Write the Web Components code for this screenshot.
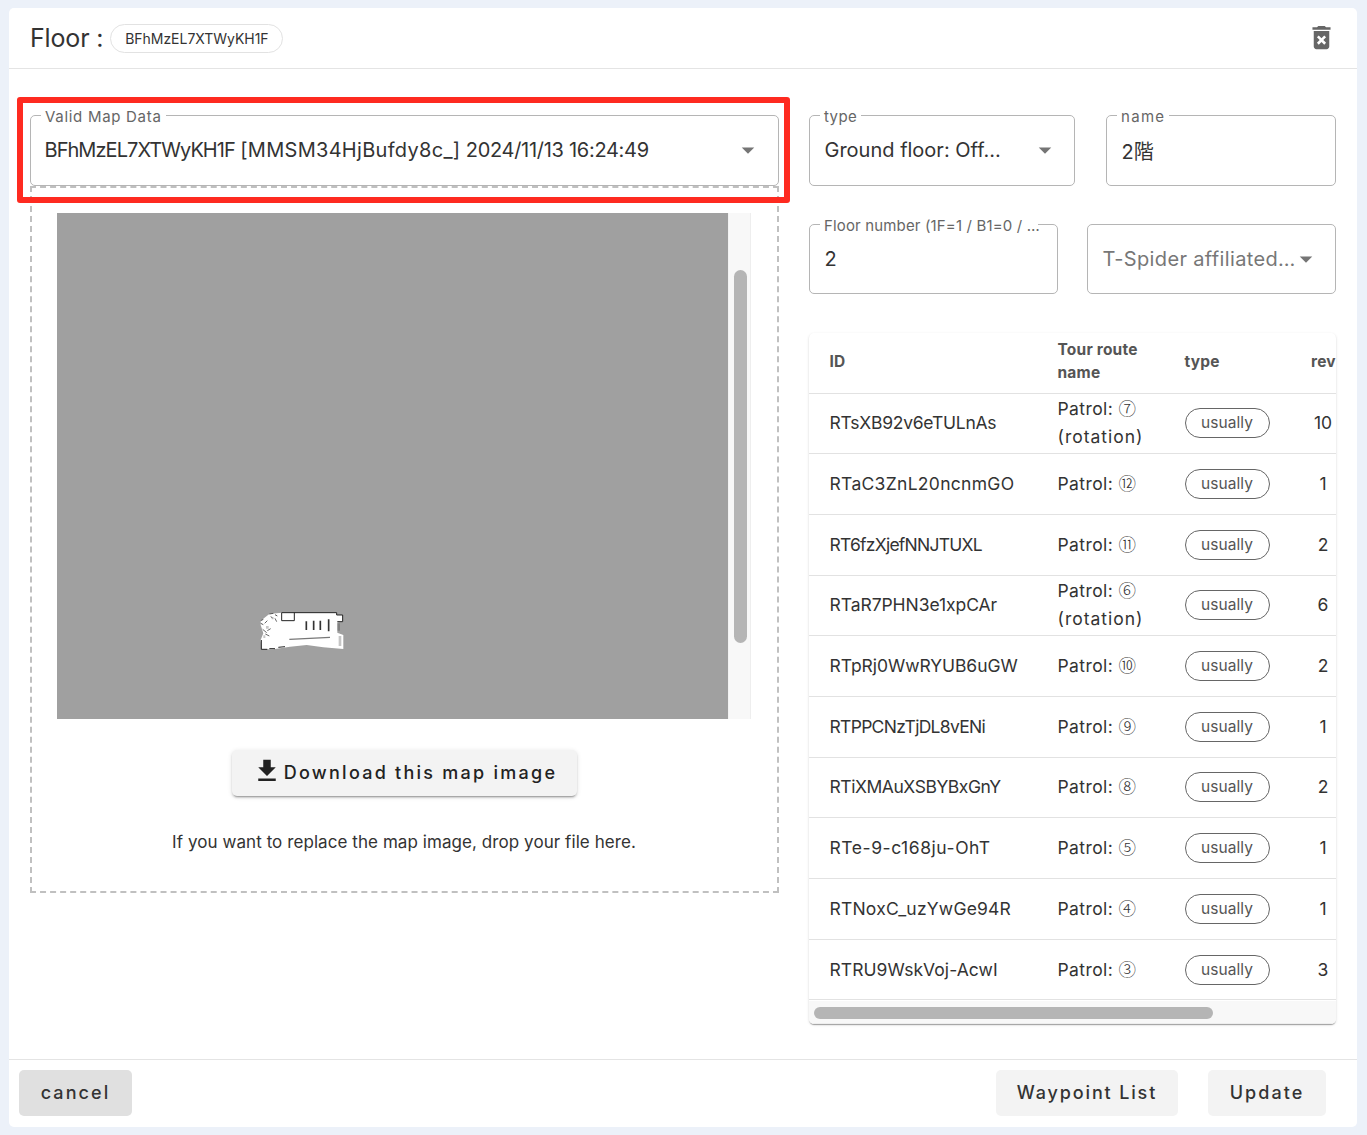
<!DOCTYPE html>
<html lang="en">
<head>
<meta charset="utf-8">
<title>Floor</title>
<style>
html,body{margin:0;padding:0;background:#ecf1f9;}
body{font-family:"Inter","Noto Sans CJK JP",sans-serif;color:#333;padding:8px 10px 8px 9px;box-sizing:border-box;height:1135px;overflow:hidden;}
</style>
</head>
<body>
<floor-dialog>
  <dialog-header slot="header" title-text="Floor :" chip="BFhMzEL7XTWyKH1F"></dialog-header>
  <div slot="left" style="display:contents">
    <outlined-field label="Valid Map Data" dropdown style="--value-ls:-.29px;--legend-ls:.7px;--arrow-right:15px"><span style="letter-spacing:-.95px;margin-left:-1px">BFhMzEL7XTWyKH1F</span> <span style="letter-spacing:.3px">[MMSM34HjBufdy8c_]</span> 2024/11/13 16:24:49</outlined-field>
    <red-mark></red-mark>
    <drop-zone></drop-zone>
  </div>
  <div slot="right" style="display:contents">
    <field-grid>
      <outlined-field style="width:266px;--legend-ls:.4px;--arrow-right:14px" label="type" dropdown>Ground floor: Off…</outlined-field>
      <outlined-field style="width:230px;--legend-ls:1.3px" label="name">2階</outlined-field>
    </field-grid>
    <field-grid>
      <outlined-field style="width:249px;--fh:77px;--legend-ls:.15px" label="Floor number (1F=1 / B1=0 / …">2</outlined-field>
      <outlined-field style="width:249px;--fh:70px;--value-color:#777;--value-ls:.35px;--arrow-right:14px;--gap:2px" dropdown>T-Spider affiliated…</outlined-field>
    </field-grid>
    <route-table></route-table>
  </div>
  <action-button slot="foot-left" variant="cancel" w="113" style="letter-spacing:2.1px">cancel</action-button>
  <action-button slot="foot-right" w="182" style="letter-spacing:1.85px">Waypoint List</action-button>
  <action-button slot="foot-right" w="118" style="letter-spacing:2.05px">Update</action-button>
</floor-dialog>
<script>
function define(name, css, html, init){
  customElements.define(name, class extends HTMLElement{
    constructor(){
      super();
      const r=this.attachShadow({mode:'open'});
      r.innerHTML='<style>'+css+'</style>'+(typeof html==='function'?html(this):html);
    }
    connectedCallback(){ if(init&&!this._d){this._d=1;init.call(this,this.shadowRoot);} }
  });
}
define('floor-dialog',`
:host{display:flex;flex-direction:column;height:1119px;background:#fff;border-radius:5px;}
.head{height:60px;border-bottom:1px solid #e4e4e4;flex:none;}
.body{flex:1;display:flex;gap:30px;padding:39px 21px 0 21px;min-height:0;}
.left{width:749px;flex:none;position:relative;}
.right{width:527px;flex:none;display:flex;flex-direction:column;gap:31px;}
.foot{flex:none;height:68px;box-sizing:border-box;border-top:1px solid #e4e4e4;display:flex;justify-content:space-between;align-items:flex-start;padding:10px 31px 0 10px;}
.fr{display:flex;gap:30px;}
`,`
<div class="head"><slot name="header"></slot></div>
<div class="body"><div class="left"><slot name="left"></slot></div><div class="right"><slot name="right"></slot></div></div>
<div class="foot"><slot name="foot-left"></slot><div class="fr"><slot name="foot-right"></slot></div></div>`);

define('dialog-header',`
:host{display:flex;align-items:center;height:60px;padding:0 21px;box-sizing:border-box;}
.t{font-size:25px;color:#333;letter-spacing:-.15px;margin-right:7px;margin-top:-1px;}
svg{margin-left:auto;width:31px;height:31px;fill:#666;margin-right:-.5px;margin-top:-1px}
`,h=>`<span class="t">${h.getAttribute('title-text')}</span><id-chip>${h.getAttribute('chip')}</id-chip>
<svg viewBox="0 0 24 24" aria-label="delete"><path d="M6 19c0 1.1.9 2 2 2h8c1.1 0 2-.9 2-2V7H6v12zm2.46-7.12 1.41-1.41L12 12.59l2.12-2.12 1.41 1.41L13.41 14l2.12 2.12-1.41 1.41L12 15.41l-2.12 2.12-1.41-1.41L10.59 14l-2.13-2.12zM15.5 4l-1-1h-5l-1 1H5v2h14V4z"/></svg>`);

define('id-chip',`
:host{display:inline-flex;align-items:center;justify-content:center;width:173px;height:29px;box-sizing:border-box;border:1px solid #e2e2e2;border-radius:15px;font-size:14px;letter-spacing:-.03px;color:#333;white-space:nowrap;margin-top:0}
`,`<slot></slot>`);

define('outlined-field',`
:host{display:block;box-sizing:border-box;}
:host(:not([label])){padding-top:7px;}
fieldset{margin:0;box-sizing:border-box;height:var(--fh,78px);border:1px solid #b5b5b5;border-radius:5px;padding:0 15px 0 14.5px;min-width:0;}
:host(:not([label])) fieldset{height:var(--fh,71px);}
legend{font-size:15px;height:15px;color:#666;padding:0 4px;margin-left:-4.5px;white-space:nowrap;max-width:calc(100% - 8px);letter-spacing:var(--legend-ls,0);}
legend span{display:block;line-height:15px;padding-top:1px;height:14px;}
.row{display:flex;align-items:center;height:40px;margin-top:7px;font-size:20px;color:var(--value-color,#333);letter-spacing:var(--value-ls,0);white-space:nowrap;}
:host(:not([label])) .row{margin-top:14px;}
.v{flex:1;min-width:0;}
svg{flex:none;width:30px;height:30px;fill:#757575;margin-right:calc(var(--arrow-right,7px) - 15px);margin-left:var(--gap,0);}
`,h=>`<fieldset>${h.hasAttribute('label')?`<legend><span>${h.getAttribute('label')}</span></legend>`:''}
<div class="row"><span class="v"><slot></slot></span>${h.hasAttribute('dropdown')?'<svg viewBox="0 0 24 24"><path d="M7 10l5 5 5-5z"/></svg>':''}</div></fieldset>`);

define('field-grid',`:host{display:flex;justify-content:space-between;flex:none;}`,`<slot></slot>`);

define('red-mark',`
:host{position:absolute;left:-13px;top:-11px;width:773px;height:106px;box-sizing:border-box;border:6px solid #fe2a20;border-radius:3px;pointer-events:none;z-index:2;}
`,``);

define('drop-zone',`
:host{display:block;box-sizing:border-box;height:707px;border:2px dashed #c0c0c0;padding:25px 26px 0 25px;text-align:center;}
.m{display:flex;height:506px;}
.sb{width:23px;box-sizing:border-box;background:#f8f8f8;border-right:1px solid #eee;border-left:1px solid #f2f2f2;flex:none;padding:57px 3px 0 5px;}
.th{height:373px;background:#b5b5b5;border-radius:7px;}
map-view{flex:none}
.b{margin:31px auto 0;width:345px;}
p{margin:34px 0 0;font-size:17px;line-height:24px;color:#333;letter-spacing:.07px}
`,`<div class="m"><map-view></map-view><div class="sb"><div class="th"></div></div></div>
<div class="b"><action-button variant="raised" w="345" icon style="letter-spacing:2.25px">Download this map image</action-button></div>
<p>If you want to replace the map image, drop your file here.</p>`);

define('map-view',`:host{display:block;width:671px;height:506px;}svg{display:block}`,`
<svg width="671" height="506" viewBox="57 213 671 506">
<rect x="57" y="213" width="671" height="506" fill="#a0a0a0"/>
<g transform="translate(230 590) scale(.3333)">
<path fill="#fff" d="M92 92 118 72 155 68H320V75H338V95L322 97V128L340 135V177L280 172 230 165 180 170 130 178H95L92 150 100 130 92 105Z"/>
<g fill="none" stroke="#222" stroke-width="3">
<path d="M155 68H320M155 68V92H193V68"/>
<path d="M320 68V75H338V95H322"/>
<path stroke="#333" stroke-width="5" d="M229 94V120M251 92V120M271 92V120M296 88V124"/>
<path stroke="#777" stroke-width="4" d="M178 148 300 142"/>
<path stroke-width="3" d="M94 150V178H112M118 176H135M145 172 165 170"/>
<path stroke="#555" stroke-width="3" d="M92 92 100 88M118 72 130 70M122 80 128 84M135 74 142 78M92 100 100 104"/>
<path stroke="#666" d="M98 118 110 128M104 100 112 92M112 122 122 116M135 85 140 95M106 132 118 138"/>
</g>
<path fill="#a0a0a0" d="M108 108h8v8h-8zM125 82h6v6h-6zM326 138h8v30h-8zM100 136h6v8h-6z" opacity=".6"/>
<path fill="#222" d="M322 100h8v22h-8z" opacity=".25"/>
</g>
</svg>`);

define('action-button',`
:host{display:inline-flex;align-items:center;justify-content:center;box-sizing:border-box;height:46px;padding-bottom:2px;border-radius:5px;background:#f3f3f3;font-size:18px;letter-spacing:1.9px;color:#333;white-space:nowrap;font-weight:500}
:host([variant=cancel]){background:#e0e0e0;}
:host([variant=raised]){box-shadow:0 3px 1px -2px rgba(0,0,0,.2),0 2px 2px 0 rgba(0,0,0,.14),0 1px 5px 0 rgba(0,0,0,.12);color:#222;}
svg{width:30px;height:30px;fill:#222;margin-right:2px;margin-top:-2px;margin-left:1px}
`,h=>`${h.hasAttribute('icon')?'<svg viewBox="0 0 24 24"><path d="M19 9h-4V3H9v6H5l7 7 7-7zM5 18v2h14v-2H5z"/></svg>':''}<slot></slot>`,
function(){this.style.width=this.getAttribute('w')+'px';});

define('status-chip',`
:host{display:inline-flex;align-items:center;justify-content:center;width:85px;height:30px;box-sizing:border-box;border:1px solid #666;border-radius:15px;font-size:15.5px;letter-spacing:.1px;color:#555;}
`,`<slot></slot>`);

const ROUTES=[
['RTsXB92v6eTULnAs',-.25,'⑦',1,'10'],
['RTaC3ZnL20ncnmGO',.3,'⑫',0,'1'],
['RT6fzXjefNNJTUXL',-.75,'⑪',0,'2'],
['RTaR7PHN3e1xpCAr',-.06,'⑥',1,'6'],
['RTpRj0WwRYUB6uGW',-.06,'⑩',0,'2'],
['RTPPCNzTjDL8vENi',-.7,'⑨',0,'1'],
['RTiXMAuXSBYBxGnY',-.45,'⑧',0,'2'],
['RTe-9-c168ju-OhT',.55,'⑤',0,'1'],
['RTNoxC_uzYwGe94R',.2,'④',0,'1'],
['RTRU9WskVoj-AcwI',.05,'③',0,'3']];
define('route-table',`
:host{display:block;flex:none;margin-top:8px;width:527px;height:691px;box-sizing:border-box;background:#fff;border-radius:5px;box-shadow:0 2px 1px -1px rgba(0,0,0,.2),0 1px 1px 0 rgba(0,0,0,.14),0 1px 3px 0 rgba(0,0,0,.12);overflow:hidden;}
.clip{overflow:hidden;height:668px;}
table{border-collapse:collapse;table-layout:fixed;width:527px;}
col.a{width:228px}col.b{width:127px}col.c{width:126px}col.d{width:46px}
th,td{padding:0 0 0 20.5px;border-bottom:1px solid #e2e2e2;vertical-align:middle;text-align:left;overflow:visible;white-space:nowrap}
th{height:60px;padding-bottom:3px;box-sizing:border-box;font-size:15.5px;line-height:23px;font-weight:700;letter-spacing:.2px;color:#555;white-space:normal;}
td{height:59.7px;font-size:17.5px;line-height:28px;color:#333;}
td.n{padding:0 0 0 20px;text-align:center;}
td.r{white-space:normal;letter-spacing:.4px}
td.r .c{font-family:"Noto Sans CJK JP",sans-serif;font-weight:300;letter-spacing:0;line-height:1;}
td.r .o{letter-spacing:1px}
th.rv{white-space:nowrap;padding-left:21px}
.sb{height:23px;background:#f8f8f8;box-sizing:border-box;padding:6px 0 0 5px;border-bottom:1px solid #eee}
.th{width:399px;height:12px;border-radius:6px;background:#b5b5b5;}
`,`<div class="clip"><table><colgroup><col class="a"><col class="b"><col class="c"><col class="d"></colgroup>
<thead><tr><th>ID</th><th>Tour route name</th><th>type</th><th class="rv">rev</th></tr></thead>
<tbody>${ROUTES.map(r=>`<tr><td style="letter-spacing:${r[1]}px">${r[0]}</td><td class="r">Patrol: <span class="c">${r[2]}</span>${r[3]?' <span class="o">(rotation)</span>':''}</td><td><status-chip>usually</status-chip></td><td class="n">${r[4]}</td></tr>`).join('')}</tbody></table></div>
<div class="sb"><div class="th"></div></div>`);
</script>
</body>
</html>
